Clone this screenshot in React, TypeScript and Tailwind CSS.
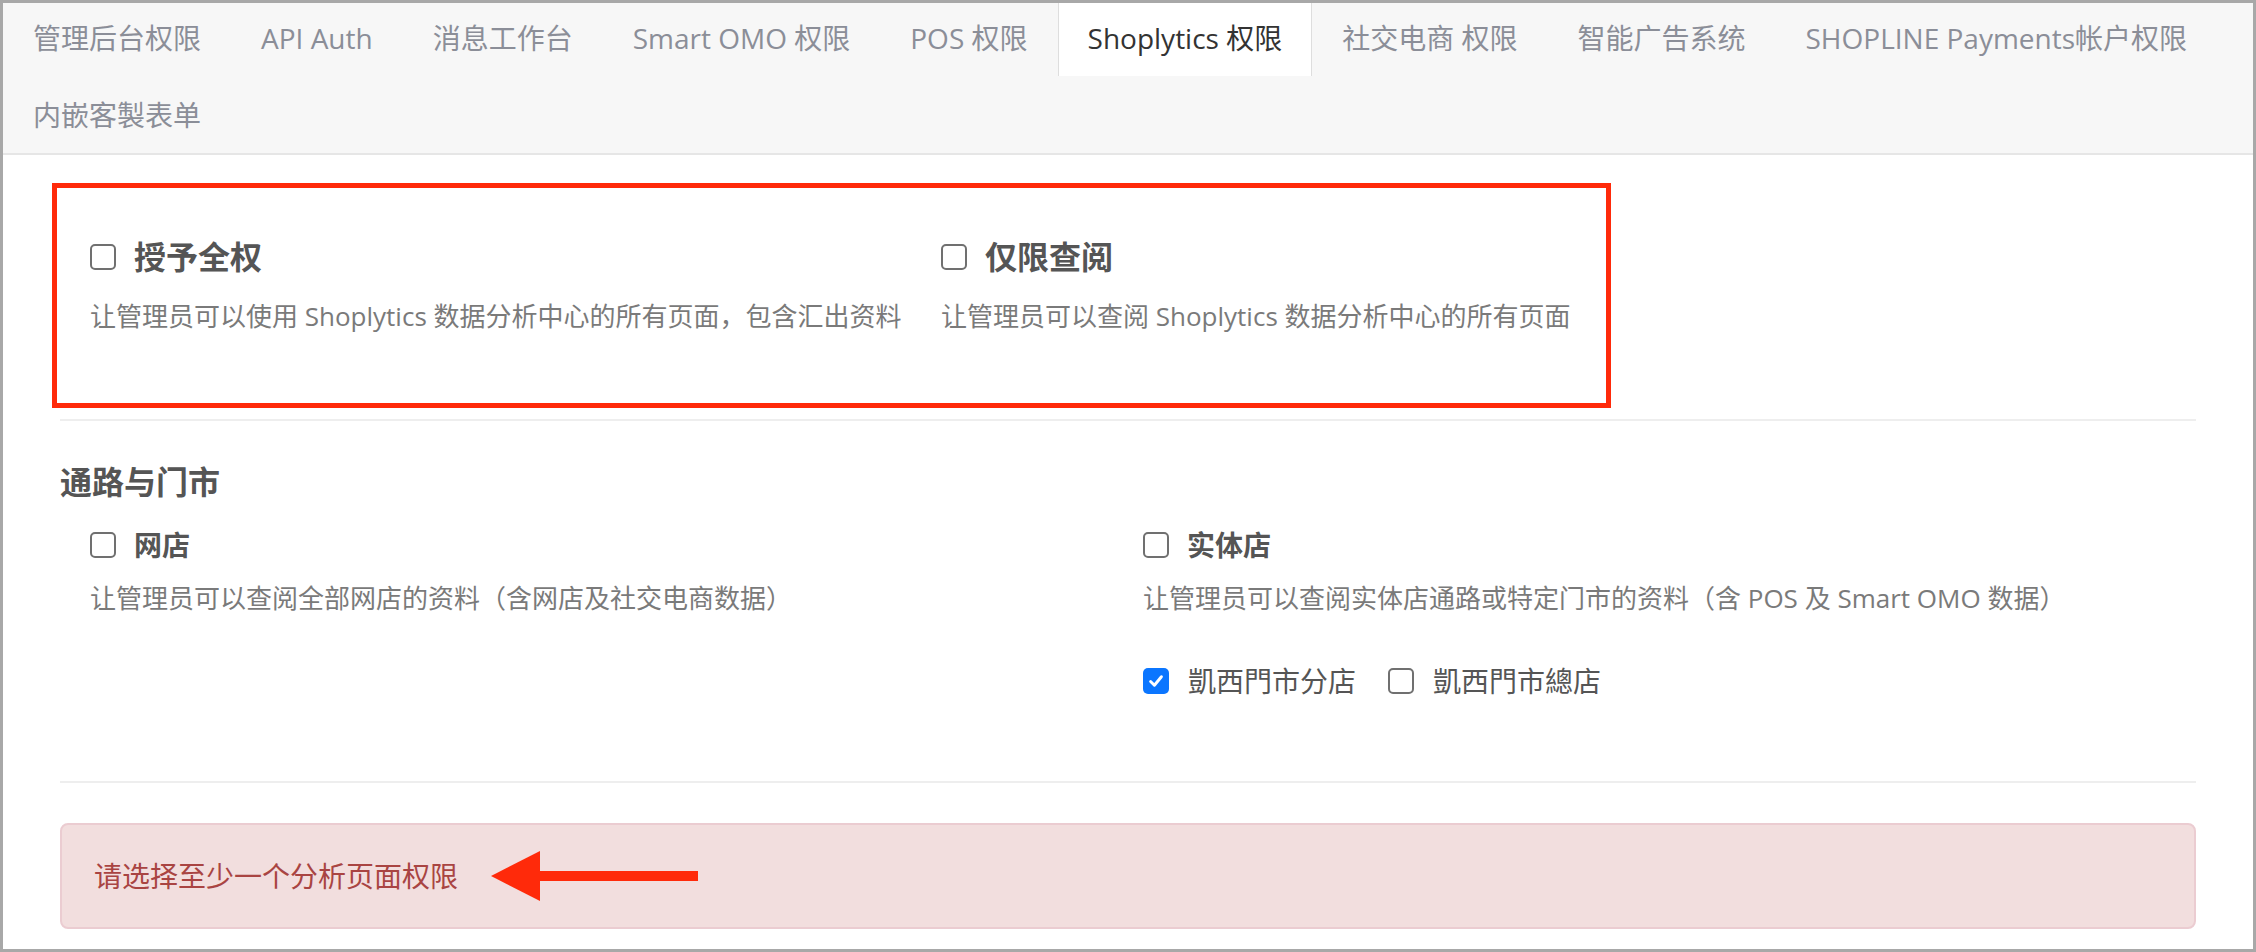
import React from "react";

const tabs = [
  "管理后台权限",
  "API Auth",
  "消息工作台",
  "Smart OMO 权限",
  "POS 权限",
  "Shoplytics 权限",
  "社交电商 权限",
  "智能广告系统",
  "SHOPLINE Payments帐户权限",
  "内嵌客製表单",
];

function Box({ checked = false }: { checked?: boolean }) {
  if (checked) {
    return (
      <span className="w-[26px] h-[26px] shrink-0 rounded-[5px] bg-[#0b76ff] flex items-center justify-center">
        <svg width="18" height="18" viewBox="0 0 16 16">
          <path d="M3.2 8.4 L6.6 11.8 L12.8 4.2" fill="none" stroke="#fff" strokeWidth="2.6" strokeLinecap="round" strokeLinejoin="round" />
        </svg>
      </span>
    );
  }
  return <span className="w-[26px] h-[26px] shrink-0 rounded-[5px] border-2 border-[#707070] bg-white" />;
}

export default function App() {
  return (
    <div className="w-[2256px] h-[952px] bg-white border-[3px] border-[#a8a8a8] overflow-hidden flex flex-col font-['Open_Sans','Noto_Sans_CJK_SC',sans-serif]">
      {/* tab bar */}
      <div className="bg-[#f7f7f7] border-b-2 border-[#e6e6e6] flex flex-wrap gap-y-[4px] shrink-0">
        {tabs.map((t) => {
          const active = t === "Shoplytics 权限";
          return (
            <div
              key={t}
              className={
                active
                  ? "h-[73px] px-[30px] pb-[3px] flex items-center text-[28px] text-[#333] bg-white shadow-[inset_1px_0_0_#dedede,inset_-1px_0_0_#dedede] whitespace-nowrap"
                  : "h-[73px] px-[30px] pb-[3px] flex items-center text-[28px] text-[#8b8e98] whitespace-nowrap"
              }
            >
              {t}
            </div>
          );
        })}
      </div>

      {/* content */}
      <div className="px-[57px] flex flex-col">
        {/* annotated top row */}
        <div className="mt-[28px] -ml-[8px] w-[1559px] h-[225px] border-[5px] border-[#ff2a0a] pl-[33px] pt-[45px] flex">
          <div className="w-[851px] flex flex-col">
            <div className="h-[48px] flex items-center">
              <Box />
              <span className="ml-[18px] text-[32px] font-bold text-[#555] leading-[48px]">授予全权</span>
            </div>
            <div className="mt-[16px] text-[26px] leading-[39px] text-[#7a7a7a] whitespace-nowrap">
              让管理员可以使用 Shoplytics 数据分析中心的所有页面，包含汇出资料
            </div>
          </div>
          <div className="flex flex-col">
            <div className="h-[48px] flex items-center">
              <Box />
              <span className="ml-[18px] text-[32px] font-bold text-[#555] leading-[48px]">仅限查阅</span>
            </div>
            <div className="mt-[16px] text-[26px] leading-[39px] text-[#7a7a7a] whitespace-nowrap">
              让管理员可以查阅 Shoplytics 数据分析中心的所有页面
            </div>
          </div>
        </div>

        <div className="mt-[11px] h-[2px] bg-[#eeeeee]" />

        <div className="mt-[39px] text-[32px] font-bold text-[#555] leading-[44px]">通路与门市</div>

        <div className="flex pl-[30px] mt-[17px]">
          <div className="w-[1053px] flex flex-col">
            <div className="h-[48px] flex items-center">
              <Box />
              <span className="ml-[18px] text-[28px] font-bold text-[#555] leading-[48px]">网店</span>
            </div>
            <div className="mt-[10px] text-[26px] leading-[39px] text-[#7a7a7a] whitespace-nowrap">
              让管理员可以查阅全部网店的资料（含网店及社交电商数据）
            </div>
          </div>
          <div className="flex flex-col">
            <div className="h-[48px] flex items-center">
              <Box />
              <span className="ml-[18px] text-[28px] font-bold text-[#555] leading-[48px]">实体店</span>
            </div>
            <div className="mt-[10px] text-[26px] leading-[39px] text-[#7a7a7a] whitespace-nowrap">
              让管理员可以查阅实体店通路或特定门市的资料（含 POS 及 Smart OMO 数据）
            </div>
            <div className="mt-[43px] h-[40px] flex items-center">
              <Box checked />
              <span className="ml-[19px] mr-[32px] text-[28px] text-[#555] leading-[40px]">凱西門市分店</span>
              <Box />
              <span className="ml-[19px] text-[28px] text-[#555] leading-[40px]">凱西門市總店</span>
            </div>
          </div>
        </div>

        <div className="mt-[80px] h-[2px] bg-[#eeeeee]" />

        <div className="mt-[40px] h-[106px] rounded-[8px] border-2 border-[#ebccd1] bg-[#f2dede] px-[32px] flex items-center">
          <span className="text-[28px] text-[#a94442] leading-[40px]">请选择至少一个分析页面权限</span>
          <svg className="ml-[33px]" width="207" height="50" viewBox="0 0 207 50">
            <polygon points="0,25 49,0 49,50" fill="#ff2a0a" />
            <rect x="48" y="20" width="159" height="10" fill="#ff2a0a" />
          </svg>
        </div>
      </div>
    </div>
  );
}
